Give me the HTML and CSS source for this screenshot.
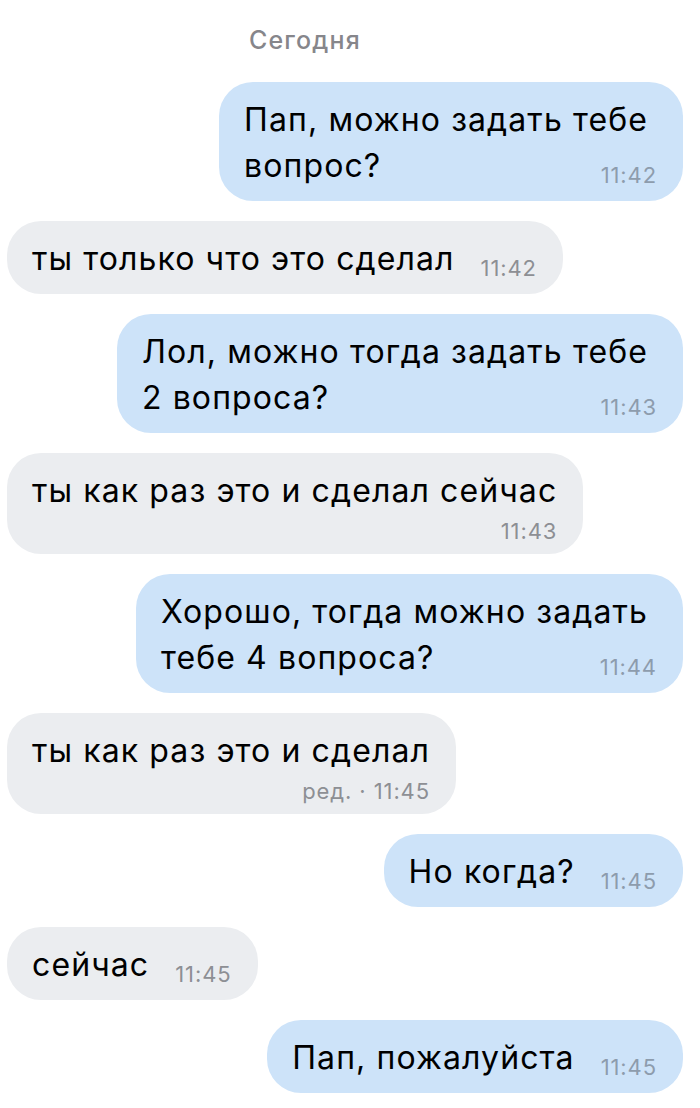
FILE: index.html
```html
<!DOCTYPE html>
<html lang="ru">
<head>
    <meta charset="UTF-8">
    <meta name="viewport" content="width=device-width, initial-scale=1.0">
    <title>Сегодня</title>
    <link rel="stylesheet" href="styles.css">
</head>
<body>
    <div class="chat">
        <div class="day">Сегодня</div>

        <div class="msg out">
            <div class="line">Пап, можно задать тебе</div>
            <div class="last">вопрос?<span class="time">11:42</span></div>
        </div>

        <div class="msg in">
            <div class="last">ты только что это сделал<span class="time">11:42</span></div>
        </div>

        <div class="msg out">
            <div class="line">Лол, можно тогда задать тебе</div>
            <div class="last">2 вопроса?<span class="time">11:43</span></div>
        </div>

        <div class="msg in">
            <div class="text">ты как раз это и сделал сейчас</div>
            <div class="meta">11:43</div>
        </div>

        <div class="msg out">
            <div class="line">Хорошо, тогда можно задать</div>
            <div class="last">тебе 4 вопроса?<span class="time">11:44</span></div>
        </div>

        <div class="msg in">
            <div class="text">ты как раз это и сделал</div>
            <div class="meta">ред. · 11:45</div>
        </div>

        <div class="msg out">
            <div class="last">Но когда?<span class="time">11:45</span></div>
        </div>

        <div class="msg in">
            <div class="last">сейчас<span class="time">11:45</span></div>
        </div>

        <div class="msg out">
            <div class="last">Пап, пожалуйста<span class="time">11:45</span></div>
        </div>
    </div>
</body>
</html>
```

FILE: styles.css
```css
body {
    margin: 0;
    background-color: #fff;
    font-family: Inter, "Liberation Sans", Arial, sans-serif;
    color: #000;
}
.chat {
    display: flex;
    flex-direction: column;
    gap: 20px;
    padding: 26px 17px 0 7px;
}
.day {
    margin-right: 80px;
    margin-bottom: 8px;
    text-align: center;
    font-size: 25px;
    font-weight: 500;
    letter-spacing: 1.2px;
    line-height: 28px;
    color: #86868b;
}
.msg {
    padding: 15px 26px 12px 25px;
    border-radius: 34px;
    font-size: 32px;
    letter-spacing: 1.1px;
    line-height: 46px;
}
.msg.out {
    align-self: flex-end;
    background-color: #cde3f9;
}
.msg.in {
    align-self: flex-start;
    background-color: #ebedf0;
}
.line {
    padding-right: 9px;
}
.last {
    display: flex;
    justify-content: space-between;
    align-items: flex-end;
    gap: 26px;
}
.time, .meta {
    font-size: 22px;
    letter-spacing: 0.9px;
    line-height: 28px;
    white-space: nowrap;
}
.meta {
    padding-top: 6px;
    text-align: right;
    line-height: 22px;
}
.out .time {
    color: #8d9cad;
}
.in .time, .in .meta {
    color: #8d8f94;
}
```
